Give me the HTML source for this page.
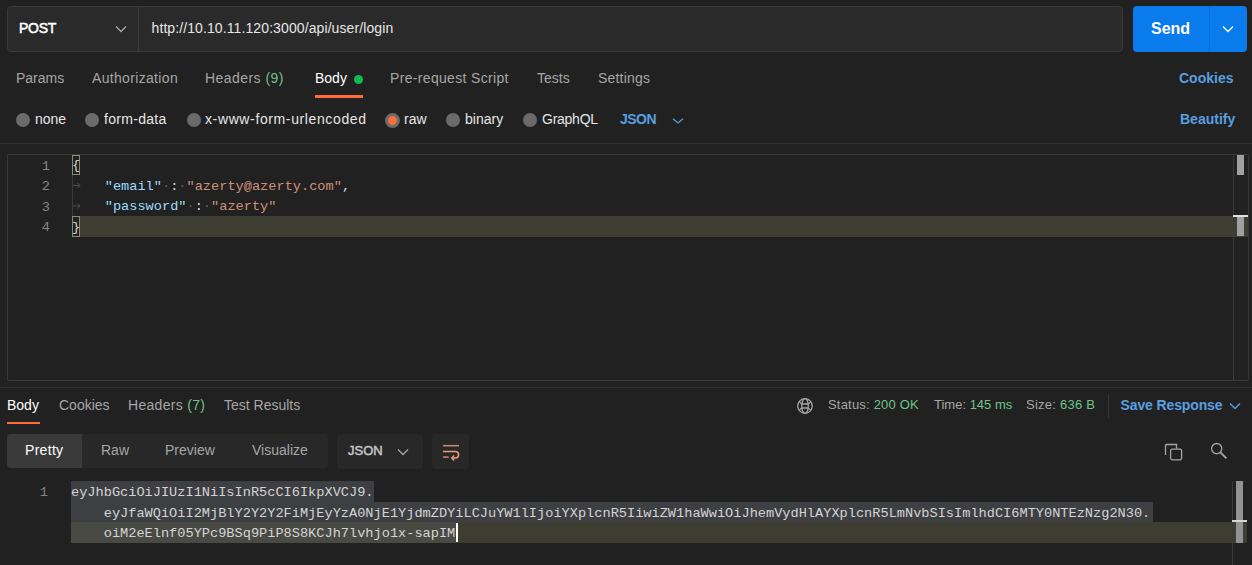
<!DOCTYPE html>
<html><head><meta charset="utf-8">
<style>
*{margin:0;padding:0;box-sizing:border-box}
html,body{width:1252px;height:565px;overflow:hidden;background:#212121;font-family:"Liberation Sans",sans-serif;color:#a6a6a6}
.a{position:absolute}
.t{position:absolute;white-space:nowrap;line-height:20px;font-size:14px}
.w{color:#ffffff}
.g{color:#6fc48a}
.b{color:#5a9ee0}
.mono{font-family:"Liberation Mono",monospace;font-size:13.63px;line-height:20.5px;white-space:pre}
.radio{position:absolute;width:14px;height:14px;border-radius:50%;background:#6b6b6b}
</style></head>
<body>
<!-- top bar -->
<div class="a" style="left:7px;top:6px;width:1116px;height:46px;background:#2a2a2a;border:1px solid #3a3a3a;border-radius:4px"></div>
<div class="a" style="left:138px;top:7px;width:1px;height:44px;background:#3a3a3a"></div>
<div class="t w" style="left:19px;top:18px;-webkit-text-stroke:0.5px #fff;letter-spacing:-0.3px">POST</div>
<svg class="a" style="left:115px;top:25px" width="12" height="8" viewBox="0 0 12 8"><path d="M1 1.5 L6 6.5 L11 1.5" fill="none" stroke="#a6a6a6" stroke-width="1.3"/></svg>
<div class="t" style="left:151.5px;top:18px;color:#e6e6e6;letter-spacing:0.1px">http://10.10.11.120:3000/api/user/login</div>
<div class="a" style="left:1133px;top:6px;width:114px;height:46px;background:#097bed;border-radius:4px"></div>
<div class="a" style="left:1209px;top:6px;width:1px;height:46px;background:#0a6fd4"></div>
<div class="t w" style="left:1151px;top:19px;font-size:16px;font-weight:bold">Send</div>
<svg class="a" style="left:1222px;top:25px" width="12" height="8" viewBox="0 0 12 8"><path d="M1 1.5 L6 6.5 L11 1.5" fill="none" stroke="#ffffff" stroke-width="1.3"/></svg>

<!-- request tabs -->
<div class="t" style="left:16px;top:68px">Params</div>
<div class="t" style="left:92px;top:68px;letter-spacing:0.33px">Authorization</div>
<div class="t" style="left:205px;top:68px;letter-spacing:0.45px">Headers <span class="g">(9)</span></div>
<div class="t w" style="left:315px;top:68px">Body</div>
<div class="a" style="left:354px;top:75px;width:9px;height:9px;border-radius:50%;background:#0cbb52"></div>
<div class="a" style="left:315px;top:95px;width:48px;height:3px;background:#ff6c37"></div>
<div class="t" style="left:390px;top:68px;letter-spacing:0.33px">Pre-request Script</div>
<div class="t" style="left:537px;top:68px">Tests</div>
<div class="t" style="left:598px;top:68px;letter-spacing:0.2px">Settings</div>
<div class="t b" style="left:1179px;top:68px;font-weight:bold">Cookies</div>

<!-- body type radios -->
<div class="radio" style="left:16px;top:113px"></div>
<div class="t w" style="left:35px;top:109px;color:#e6e6e6">none</div>
<div class="radio" style="left:85px;top:113px"></div>
<div class="t" style="left:104px;top:109px;color:#e6e6e6;letter-spacing:0.3px">form-data</div>
<div class="radio" style="left:187px;top:113px"></div>
<div class="t" style="left:205px;top:109px;color:#e6e6e6;letter-spacing:0.62px">x-www-form-urlencoded</div>
<div class="a" style="left:385px;top:113px;width:15px;height:15px;border-radius:50%;background:#ff6c37;border:3px solid #6b6b6b"></div>
<div class="t" style="left:404px;top:109px;color:#e6e6e6">raw</div>
<div class="radio" style="left:446px;top:113px"></div>
<div class="t" style="left:465px;top:109px;color:#e6e6e6">binary</div>
<div class="radio" style="left:523px;top:113px"></div>
<div class="t" style="left:542px;top:109px;color:#e6e6e6;letter-spacing:-0.25px">GraphQL</div>
<div class="t b" style="left:620px;top:109px;font-weight:bold;letter-spacing:-0.5px">JSON</div>
<svg class="a" style="left:672px;top:117px" width="12" height="8" viewBox="0 0 12 8"><path d="M1 1.8 L6 6 L11 1.8" fill="none" stroke="#5a9ee0" stroke-width="1.3"/></svg>
<div class="t b" style="left:1180px;top:109px;font-weight:bold">Beautify</div>

<div class="a" style="left:0;top:143px;width:1252px;height:1px;background:#303030"></div>

<!-- request editor -->
<div class="a" style="left:7px;top:154px;width:1242px;height:227px;border:1px solid #393939;border-radius:2px"></div>
<div class="a" style="left:80px;top:216px;width:1168px;height:21px;background:#3f3e32"></div>
<div class="a" style="left:72px;top:175px;width:1px;height:41px;background:#3a3a3a"></div>
<div class="a mono" style="left:0;top:156.5px;width:50px;text-align:right;color:#858585">1
2
3
4</div>
<svg class="a" style="left:72px;top:181px" width="10" height="30" viewBox="0 0 10 30"><g fill="none" stroke="#4e4e4e" stroke-width="1"><path d="M1 4.5H8M5.5 2L8 4.5L5.5 7"/><path d="M1 25H8M5.5 22.5L8 25L5.5 27.5"/></g></svg>
<div class="a mono" style="left:72px;top:156px;color:#d4d4d4"><span>{</span>
    <span style="color:#9cdcfe">"email"</span><span style="color:#5a5a5a">·</span>:<span style="color:#5a5a5a">·</span><span style="color:#ce9178">"azerty@azerty.com"</span>,
    <span style="color:#9cdcfe">"password"</span><span style="color:#5a5a5a">·</span>:<span style="color:#5a5a5a">·</span><span style="color:#ce9178">"azerty"</span>
}</div>
<div class="a" style="left:72px;top:155px;width:8px;height:20px;border:1px solid #8a8a7a"></div>
<div class="a" style="left:72px;top:216px;width:8px;height:21px;border:1px solid #8a8a7a"></div>
<!-- scrollbar / overview ruler -->
<div class="a" style="left:1233px;top:155px;width:1px;height:225px;background:#3a3a3a"></div>
<div class="a" style="left:1237px;top:155px;width:7px;height:20px;background:#a0a0a0"></div>
<div class="a" style="left:1233px;top:215px;width:15px;height:2px;background:#e0e0e0"></div>
<div class="a" style="left:1237px;top:217px;width:7px;height:19px;background:#a0a0a0"></div>

<div class="a" style="left:0;top:387px;width:1252px;height:1px;background:#303030"></div>

<!-- response tabs -->
<div class="t w" style="left:7px;top:395px">Body</div>
<div class="a" style="left:7px;top:421.5px;width:33px;height:2.5px;background:#ff6c37"></div>
<div class="t" style="left:59px;top:395px">Cookies</div>
<div class="t" style="left:128px;top:395px;letter-spacing:0.3px">Headers <span class="g">(7)</span></div>
<div class="t" style="left:224px;top:395px">Test Results</div>

<svg class="a" style="left:796px;top:397px" width="18" height="18" viewBox="0 0 18 18"><g fill="none" stroke="#a6a6a6" stroke-width="1.3"><circle cx="9" cy="9" r="7.3"/><ellipse cx="9" cy="9" rx="3.3" ry="7.3"/><path d="M5.8 7H12.2M5.8 11H12.2M5.8 7Q4 6 3.3 4.5M12.2 7Q14 6 14.7 4.5M5.8 11Q4 12 3.3 13.5M12.2 11Q14 12 14.7 13.5"/></g></svg>
<div class="t" style="left:828px;top:395px;font-size:13px;letter-spacing:0.2px">Status: <span class="g">200 OK</span></div>
<div class="t" style="left:934px;top:395px;font-size:13px">Time: <span class="g">145 ms</span></div>
<div class="t" style="left:1026px;top:395px;font-size:13px;letter-spacing:0.25px">Size: <span class="g">636 B</span></div>
<div class="a" style="left:1108px;top:395px;width:1px;height:23px;background:#363636"></div>
<div class="t b" style="left:1120.5px;top:395px;font-weight:bold;letter-spacing:-0.12px">Save Response</div>
<svg class="a" style="left:1229px;top:402px" width="12" height="8" viewBox="0 0 12 8"><path d="M1 1.5 L6 6.5 L11 1.5" fill="none" stroke="#5a9ee0" stroke-width="1.3"/></svg>

<!-- response toolbar -->
<div class="a" style="left:7px;top:434px;width:321px;height:34px;background:#282828;border-radius:4px"></div>
<div class="a" style="left:7px;top:434px;width:75px;height:34px;background:#3a3a3a;border-radius:4px 0 0 4px"></div>
<div class="t w" style="left:25px;top:440px;letter-spacing:0.3px">Pretty</div>
<div class="t" style="left:101px;top:440px">Raw</div>
<div class="t" style="left:165px;top:440px">Preview</div>
<div class="t" style="left:252px;top:440px">Visualize</div>
<div class="a" style="left:337px;top:434px;width:86px;height:35px;background:#282828;border-radius:4px"></div>
<div class="t" style="left:348px;top:441px;font-size:13px;color:#c8c8c8;-webkit-text-stroke:0.45px #c8c8c8">JSON</div>
<svg class="a" style="left:397px;top:448px" width="12" height="8" viewBox="0 0 12 8"><path d="M1 1.5 L6 6.5 L11 1.5" fill="none" stroke="#a6a6a6" stroke-width="1.3"/></svg>
<div class="a" style="left:432px;top:434px;width:37px;height:35px;background:#282828;border-radius:4px"></div>
<svg class="a" style="left:432px;top:434px" width="38" height="35" viewBox="0 0 38 35"><g fill="none" stroke-width="1.5" stroke-linecap="butt"><path d="M10.9 11.7H27" stroke="#c98a70"/><path d="M10.9 23.1H16.7" stroke="#c98a70"/><path d="M10.9 17.5H23.4a3.2 3.2 0 0 1 0 6.4H20" stroke="#eb9a7a"/><path d="M22.2 21.4L19.7 23.9L22.2 26.4" stroke="#eb9a7a" stroke-width="1.4"/></g></svg>
<svg class="a" style="left:1164px;top:443px" width="20" height="20" viewBox="0 0 20 20"><g fill="none" stroke="#a6a6a6" stroke-width="1.3"><path d="M1.5 12V2.5a1 1 0 0 1 1-1H12.5V5.5"/><rect x="6.6" y="6.2" width="11" height="10.6" rx="1.5"/></g></svg>
<svg class="a" style="left:1208px;top:440px" width="22" height="22" viewBox="0 0 22 22"><g fill="none" stroke="#a6a6a6" stroke-width="1.3"><circle cx="8.7" cy="8.6" r="5.1"/><path d="M12.4 12.3L18.4 18.4" stroke-width="1.8"/></g></svg>

<!-- response editor -->
<div class="a" style="left:71px;top:481px;width:303px;height:21px;background:#3e3f42"></div>
<div class="a" style="left:71px;top:502px;width:1082px;height:21px;background:#3e3f42"></div>
<div class="a" style="left:71px;top:522px;width:1176px;height:21px;background:#3e3d32"></div>
<div class="a" style="left:71px;top:522px;width:385px;height:21px;background:#4a4a44"></div>
<div class="a" style="left:456px;top:523px;width:2px;height:19px;background:#ffffff"></div>
<div class="a mono" style="left:0;top:483px;width:48px;text-align:right;color:#858585">1</div>
<div class="a mono" style="left:71px;top:483px;color:#d4d4d4">eyJhbGciOiJIUzI1NiIsInR5cCI6IkpXVCJ9.
    eyJfaWQiOiI2MjBlY2Y2Y2FiMjEyYzA0NjE1YjdmZDYiLCJuYW1lIjoiYXplcnR5IiwiZW1haWwiOiJhemVydHlAYXplcnR5LmNvbSIsImlhdCI6MTY0NTEzNzg2N30.
    oiM2eElnf05YPc9BSq9PiP8S8KCJh7lvhjo1x-sapIM</div>
<div class="a" style="left:1232px;top:481px;width:1px;height:84px;background:#3a3a3a"></div><div class="a" style="left:1232px;top:481px;width:15px;height:1px;background:#2c2c2c"></div>
<div class="a" style="left:1236px;top:481px;width:7px;height:62px;background:#929292"></div>
<div class="a" style="left:1232px;top:520px;width:15px;height:2px;background:#d8d8d0"></div>
</body></html>
